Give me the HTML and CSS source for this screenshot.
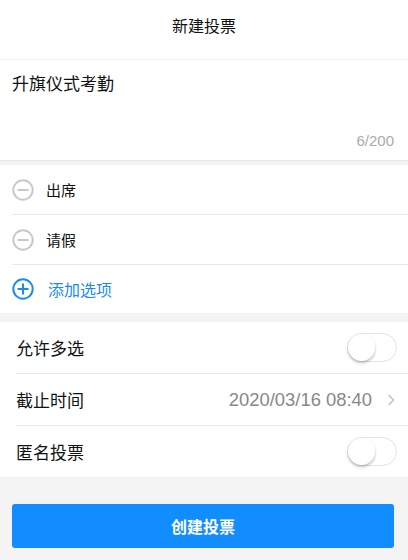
FILE: index.html
```html
<!DOCTYPE html>
<html lang="zh-CN">

<head>
    <meta charset="UTF-8">
    <meta name="viewport" content="width=device-width, initial-scale=1.0">
    <title>新建投票</title>
    <link rel="stylesheet" href="styles.css">
</head>

<body>
    <header class="nav-bar">新建投票</header>

    <section class="panel title-panel">
        <div class="title-text">升旗仪式考勤</div>
        <div class="counter">6/200</div>
    </section>

    <section class="panel options">
        <div class="option-row">
            <svg class="icon" viewBox="0 0 22 22" width="22" height="22">
                <circle cx="11" cy="11" r="9.7" fill="none" stroke="#c8c8c8" stroke-width="2"/>
                <line x1="5.5" y1="11" x2="16.5" y2="11" stroke="#c8c8c8" stroke-width="2"/>
            </svg>
            <span>出席</span>
        </div>
        <div class="option-row">
            <svg class="icon" viewBox="0 0 22 22" width="22" height="22">
                <circle cx="11" cy="11" r="9.7" fill="none" stroke="#c8c8c8" stroke-width="2"/>
                <line x1="5.5" y1="11" x2="16.5" y2="11" stroke="#c8c8c8" stroke-width="2"/>
            </svg>
            <span>请假</span>
        </div>
        <div class="option-row add-row">
            <svg class="icon" viewBox="0 0 22 22" width="22" height="22">
                <circle cx="11" cy="11" r="9.7" fill="none" stroke="#1a8cf0" stroke-width="2"/>
                <line x1="5.5" y1="11" x2="16.5" y2="11" stroke="#1a8cf0" stroke-width="2"/>
                <line x1="11" y1="5.5" x2="11" y2="16.5" stroke="#1a8cf0" stroke-width="2"/>
            </svg>
            <span>添加选项</span>
        </div>
    </section>

    <section class="panel settings">
        <div class="setting-row">
            <span>允许多选</span>
            <div class="switch"><div class="knob"></div></div>
        </div>
        <div class="setting-row">
            <span>截止时间</span>
            <div class="value">
                <span class="date">2020/03/16 08:40</span>
                <svg class="chevron" viewBox="0 0 8 14" width="8" height="14">
                    <polyline points="1.5,2 6.5,7 1.5,12" fill="none" stroke="#bbb" stroke-width="1.3"/>
                </svg>
            </div>
        </div>
        <div class="setting-row">
            <span>匿名投票</span>
            <div class="switch"><div class="knob"></div></div>
        </div>
    </section>

    <div class="footer">
        <button class="submit">创建投票</button>
    </div>
</body>

</html>
```

FILE: styles.css
```css
body {
    margin: 0;
    background-color: #f4f4f4;
    font-family: "Liberation Sans", "Noto Sans CJK SC", sans-serif;
    color: #111;
}

.nav-bar {
    height: 59px;
    line-height: 54px;
    text-align: center;
    font-size: 16px;
    background-color: #fff;
    border-bottom: 1px solid #eee;
}

.panel {
    background-color: #fff;
}

.title-panel {
    height: 101px;
    padding: 0 14px 0 12px;
    box-sizing: border-box;
    display: flex;
    flex-direction: column;
    justify-content: space-between;
    border-bottom: 1px solid #e8e8e8;
}

.title-text {
    font-size: 17px;
    padding-top: 10px;
}

.counter {
    text-align: right;
    font-size: 15px;
    color: #aaa;
    padding-bottom: 11px;
}

.options {
    margin-top: 4px;
    padding-left: 12px;
}

.option-row {
    height: 49px;
    display: flex;
    align-items: center;
    font-size: 15px;
    border-bottom: 1px solid #e8e8e8;
}

.option-row:last-child {
    border-bottom: none;
    height: 48px;
}

.option-row .icon {
    margin-right: 12px;
    flex-shrink: 0;
}

.add-row span {
    color: #1a8cf0;
    font-size: 16px;
    margin-left: 2px;
}

.settings {
    margin-top: 9px;
    padding-left: 16px;
}

.setting-row {
    height: 51px;
    display: flex;
    align-items: center;
    justify-content: space-between;
    padding-right: 11px;
    font-size: 17px;
    border-bottom: 1px solid #e8e8e8;
}

.setting-row:last-child {
    border-bottom: none;
}

.switch {
    width: 48px;
    height: 27px;
    border: 1px solid #e2e2e2;
    border-radius: 15px;
    background-color: #fff;
    position: relative;
}

.knob {
    position: absolute;
    top: 0;
    left: 0;
    width: 27px;
    height: 27px;
    border-radius: 50%;
    background-color: #fff;
    box-shadow: 0 2px 3px rgba(0, 0, 0, 0.25);
}

.value {
    display: flex;
    align-items: center;
}

.date {
    font-size: 18.4px;
    color: #888;
    margin-right: 15px;
}

.chevron {
    margin-right: 2px;
}

.footer {
    padding: 27px 14px 0 12px;
}

.submit {
    width: 100%;
    height: 44px;
    border: none;
    border-radius: 3px;
    background-color: #118dff;
    color: #fff;
    font-family: inherit;
    font-size: 16px;
    font-weight: bold;
}
```
